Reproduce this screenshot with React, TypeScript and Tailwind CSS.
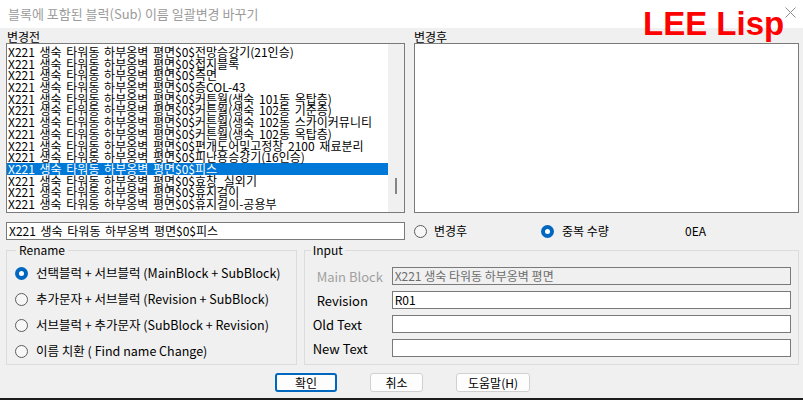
import React from "react";

const base = "X221 생숙 타워동 하부옹벽 평면$0$";
const items = [
  "전망승강기(21인승)",
  "접지블록",
  "측면",
  "층COL-43",
  "커튼월(생숙 101동 옥탑층)",
  "커튼월(생숙 102동 기준층)",
  "커튼월(생숙 102동 스카이커뮤니티",
  "커튼월(생숙 102동 옥탑층)",
  "편개도어및고정창 2100 재료분리",
  "피난용승강기(16인승)",
  "피스",
  "효창_실외기",
  "휴지걸이",
  "휴지걸이-공용부",
];
const selected = 10;

function Radio({ checked }: { checked?: boolean }) {
  return checked ? (
    <span className="w-[13px] h-[13px] rounded-full bg-[#0067c0] flex items-center justify-center shrink-0">
      <span className="w-[5px] h-[5px] rounded-full bg-white" />
    </span>
  ) : (
    <span className="w-[13px] h-[13px] rounded-full border border-[#5d5d5d] bg-[#f7f7f7] shrink-0" />
  );
}

function Field({ value, disabled }: { value?: string; disabled?: boolean }) {
  return (
    <div
      className={`flex-1 h-[18px] border border-[#7a7a7a] px-[2px] flex items-center text-[12px] leading-none ${
        disabled ? "bg-[#f0f0f0] text-[#6d6d6d]" : "bg-white text-black"
      }`}
    >
      {value}
    </div>
  );
}

export default function App() {
  return (
    <div className="relative w-[803px] h-[400px] overflow-hidden bg-[#f0f0f0] text-black font-['Noto_Sans_CJK_KR',sans-serif]">
      {/* Title bar */}
      <div className="h-[28px] bg-white flex items-center pl-[8px] text-[13px] text-[#9b9b9b]">
        블록에 포함된 블럭(Sub) 이름 일괄변경 바꾸기
      </div>
      <svg className="absolute left-[785px] top-[7px]" width="11" height="11" viewBox="0 0 11 11">
        <path d="M0.5 0.5L10.5 10.5M10.5 0.5L0.5 10.5" stroke="#8c8c8c" strokeWidth="1" />
      </svg>
      <div className="absolute left-[643px] top-[7px] text-[33px] leading-none font-bold text-[#ff0000] font-['Liberation_Sans',Arial,sans-serif]">
        LEE Lisp
      </div>

      {/* Body */}
      <div className="pl-[6px] pr-[4px]">
        <div className="grid grid-cols-[399px_385px] gap-x-[9px]">
          <div className="h-[15px] text-[12px] leading-[15px] pl-[1px] pt-[1px]">변경전</div>
          <div className="h-[15px] text-[12px] leading-[15px] pt-[1px]">변경후</div>

          <div className="h-[170px] border border-[#7a7a7a] bg-white flex overflow-hidden">
            <div className="flex-1 pt-[2px] overflow-hidden">
              {items.map((it, i) => (
                <div
                  key={i}
                  className={`h-[11.7px] leading-[11.7px] text-[12px] pl-[1px] whitespace-nowrap [word-spacing:2px] ${
                    i === selected ? "bg-[#0078d7] text-white" : ""
                  }`}
                >
                  {base + it}
                </div>
              ))}
            </div>
            <div className="w-[16px] bg-[#f0f0f0] flex flex-col">
              <div className="mt-[134px] ml-[7px] w-[2px] h-[16px] bg-[#858585]" />
            </div>
          </div>
          <div className="h-[170px] border border-[#7a7a7a] bg-white" />

          <div className="mt-[9px] h-[18px] border border-[#7a7a7a] bg-white flex items-center pl-[2px] text-[12px] leading-none [word-spacing:2px]">
            X221 생숙 타워동 하부옹벽 평면$0$피스
          </div>
          <div className="mt-[9px] h-[18px] flex items-center text-[12px]">
            <div className="w-[127px] flex items-center gap-[7px]">
              <Radio />
              <span>변경후</span>
            </div>
            <div className="w-[144px] flex items-center gap-[8px]">
              <Radio checked />
              <span>중복 수량</span>
            </div>
            <span>0EA</span>
          </div>
        </div>

        {/* Group boxes */}
        <div className="mt-[3px] flex gap-[7px]">
          <fieldset className="w-[291px] h-[122px] border border-[#dcdcdc]">
            <legend className="ml-[9px] px-[3px] text-[12px] leading-[14px]">Rename</legend>
            <div className="pl-[8px] pt-[3px] flex flex-col text-[12.5px]">
              {[
                ["선택블럭 + 서브블럭 (MainBlock + SubBlock)", true],
                ["추가문자 + 서브블럭 (Revision + SubBlock)", false],
                ["서브블럭 + 추가문자 (SubBlock + Revision)", false],
                ["이름 치환 ( Find name Change)", false],
              ].map(([label, on], i) => (
                <div key={i} className="h-[26px] flex items-center gap-[8px]">
                  <Radio checked={on as boolean} />
                  <span>{label as string}</span>
                </div>
              ))}
            </div>
          </fieldset>

          <fieldset className="w-[496px] h-[122px] border border-[#dcdcdc]">
            <legend className="ml-[6px] px-[2px] text-[12px] leading-[14px]">Input</legend>
            <div className="pl-[8px] pr-[7px] pt-[10px] flex flex-col gap-[6px] text-[13px]">
              <div className="h-[18px] flex items-center leading-none">
                <span className="w-[79px] pl-[4px] text-[#a0a0a0]">Main Block</span>
                <Field value="X221 생숙 타워동 하부옹벽 평면" disabled />
              </div>
              <div className="h-[18px] flex items-center leading-none">
                <span className="w-[79px] pl-[4px]">Revision</span>
                <Field value="R01" />
              </div>
              <div className="h-[18px] flex items-center leading-none">
                <span className="w-[79px]">Old Text</span>
                <Field />
              </div>
              <div className="h-[18px] flex items-center leading-none">
                <span className="w-[79px]">New Text</span>
                <Field />
              </div>
            </div>
          </fieldset>
        </div>

        {/* Buttons */}
        <div className="mt-[8px] flex justify-center gap-[33px] text-[12px]">
          <button className="w-[62px] h-[19px] rounded-[3px] border-2 border-[#0067c0] bg-[#fdfdfd] leading-none">
            확인
          </button>
          <button className="w-[53px] h-[19px] rounded-[3px] border border-[#d0d0d0] bg-[#fdfdfd] leading-none">
            취소
          </button>
          <button className="w-[74px] h-[19px] rounded-[3px] border border-[#d0d0d0] bg-[#fdfdfd] leading-none">
            도움말(H)
          </button>
        </div>
      </div>

      <div className="absolute left-0 right-0 bottom-0 h-[2px] bg-[#1c1c1c]" />
    </div>
  );
}
